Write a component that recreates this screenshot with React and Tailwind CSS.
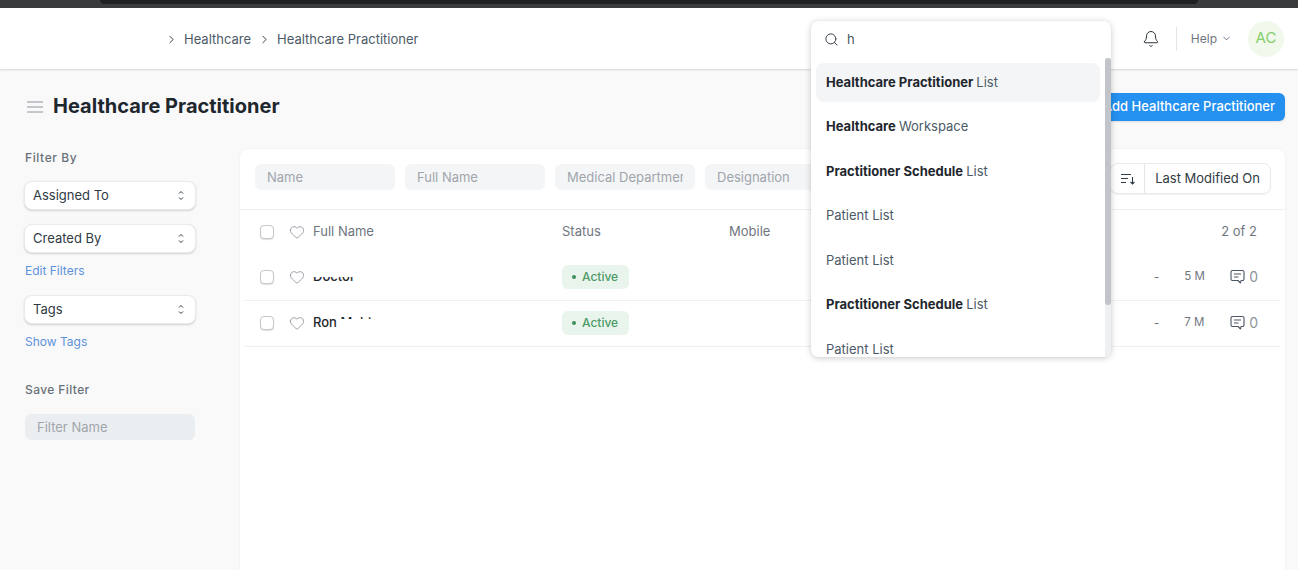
import { Search, Bell, ChevronRight, ChevronDown, Heart } from 'lucide-react'

const searchItems = [
  { bold: 'Healthcare Practitioner', rest: 'List', active: true },
  { bold: 'Healthcare', rest: 'Workspace' },
  { bold: 'Practitioner Schedule', rest: 'List' },
  { rest: 'Patient List' },
  { rest: 'Patient List' },
  { bold: 'Practitioner Schedule', rest: 'List' },
  { rest: 'Patient List' },
]

function Checkbox() {
  return <span className="h-[14px] w-[14px] shrink-0 rounded-[4px] border border-[#c4c7cc] bg-white shadow-[0_1px_1px_rgba(0,0,0,0.12)]" />
}

function FilterSelect({ label }) {
  return (
    <div className="flex h-[29px] w-[172px] items-center justify-between rounded-lg border border-[#e8eaed] bg-white pl-[8px] pr-[11px] text-[13px] text-[#313b44] shadow-[0_1px_2px_rgba(0,0,0,0.16)]">
      <span>{label}</span>
      <svg width="6" height="11" viewBox="0 0 6 11" fill="none" stroke="#313b44" strokeWidth="1">
        <path d="M1 3.5l2-2 2 2M1 7.5l2 2 2-2" />
      </svg>
    </div>
  )
}

function FieldInput({ label }) {
  return (
    <div className="flex h-[26px] w-[140px] shrink-0 items-center overflow-hidden whitespace-nowrap rounded-md bg-[#f4f5f6] pl-[12px] pr-[12px] pt-[1px] text-[13px] text-[#a0a5ad]">
      <span className="w-full overflow-hidden">{label}</span>
    </div>
  )
}

function ListRow({ name, ago }) {
  return (
    <div className="mx-[5px] flex h-[46px] items-center border-b border-[#eef0f2] pb-[2px] pl-[15px] pr-[22px]">
      <Checkbox />
      <Heart size={16} strokeWidth={1} className="ml-[15px] mt-[1px] shrink-0 text-[#6f7680]" />
      <div className="ml-[8px] w-[249px] shrink-0 text-[13px] font-medium text-[#1f272e]">{name}</div>
      <span className="flex h-[24px] w-[67px] items-center rounded-md bg-[#e9f4ec] pl-[10px] text-[12px] font-medium text-[#4c9a68]">
        <span className="mr-[6px] h-[4px] w-[4px] rounded-full bg-[#3f8f5e]" />
        Active
      </span>
      <div className="ml-auto flex items-center text-[#6f7680]">
        <span className="text-[12px]">-</span>
        <span className="ml-[25px] w-[24px] text-[11.5px]">{ago}</span>
        <svg width="15" height="15" viewBox="0 0 15 15" fill="none" stroke="#4b5563" strokeWidth="1.1" strokeLinejoin="round" className="ml-[22px]">
          <path d="M2.5 1.5h10a1.5 1.5 0 0 1 1.5 1.5v7a1.5 1.5 0 0 1-1.5 1.5H11l-.5 2.5-2.5-2.5H2.5A1.5 1.5 0 0 1 1 10V3a1.5 1.5 0 0 1 1.5-1.5z" />
          <path d="M4 5h7M4 8h4.5" />
        </svg>
        <span className="ml-[4px] text-[14px] text-[#8d949c]">0</span>
      </div>
    </div>
  )
}

export default function App() {
  return (
    <div className="relative flex h-[570px] w-full flex-col overflow-hidden bg-[#f9f9fa] font-['Inter',sans-serif]">
      {/* Browser chrome sliver */}
      <div className="h-[8px] shrink-0 bg-[#3a3b3d]">
        <div className="mx-[100px] h-[4px] rounded-b-lg bg-[#1f2023]" />
      </div>

      {/* Navbar */}
      <header className="flex h-[61px] shrink-0 items-center bg-white pl-[165px] pr-[14px] shadow-[0_1px_2px_rgba(0,0,0,0.14)]">
        <nav className="flex translate-y-[1px] items-center text-[13px] text-[#4c5a67]">
          <ChevronRight size={13} strokeWidth={1.75} className="text-[#313b44]" />
          <span className="ml-[6px]">Healthcare</span>
          <ChevronRight size={13} strokeWidth={1.75} className="ml-[7px] text-[#313b44]" />
          <span className="ml-[6px]">Healthcare Practitioner</span>
        </nav>
        <div className="ml-auto flex items-center">
          <Bell size={18} strokeWidth={1.25} className="text-[#1f272e]" />
          <span className="ml-[16px] h-[24px] w-px bg-[#e2e6e9]" />
          <span className="ml-[14px] text-[12px] text-[#6f7680]">Help</span>
          <ChevronDown size={11} strokeWidth={1.75} className="ml-[4px] text-[#4c5a67]" />
          <span className="ml-[16px] flex h-[36px] w-[36px] items-center justify-center rounded-full bg-[#f1f8ec] text-[15px] text-[#86cf6b]">AC</span>
        </div>
      </header>

      {/* Page head */}
      <div className="flex h-[80px] shrink-0 items-center pb-[5px] pl-[27px] pr-[13px]">
        <svg width="16" height="12" viewBox="0 0 16 12" fill="none" stroke="#8d949c" strokeWidth="1.2">
          <path d="M0 1h16M0 6h16M0 11h16" />
        </svg>
        <h1 className="ml-[10px] -translate-y-[1px] text-[20px] font-bold text-[#1f272e]">Healthcare Practitioner</h1>
        <button className="ml-auto h-[28px] rounded-md bg-[#2490ef] px-[10px] text-[13px] font-medium text-white shadow-[0_1px_2px_rgba(0,0,0,0.12)]">
          Add Healthcare Practitioner
        </button>
      </div>

      <div className="flex min-h-0 flex-1">
        {/* Filters sidebar */}
        <aside className="w-[240px] shrink-0 pl-[24px]">
          <div className="pl-[1px] pt-[2px] text-[12px] font-medium leading-[14px] tracking-[0.6px] text-[#687178]">Filter By</div>
          <div className="mt-[16px]"><FilterSelect label="Assigned To" /></div>
          <div className="mt-[14px]"><FilterSelect label="Created By" /></div>
          <div className="mt-[10px] pl-[1px] text-[12px] leading-[15px] text-[#5e92d9]">Edit Filters</div>
          <div className="mt-[17px]"><FilterSelect label="Tags" /></div>
          <div className="mt-[10px] pl-[1px] text-[12px] leading-[15px] text-[#5e92d9]">Show Tags</div>
          <div className="mt-[34px] pl-[1px] text-[12px] font-medium leading-[14px] tracking-[0.4px] text-[#687178]">Save Filter</div>
          <div className="ml-[1px] mt-[17px] flex h-[26px] w-[170px] items-center rounded-md bg-[#ebeef0] pl-[12px] pt-[1px] text-[13px] text-[#a0a5ad]">Filter Name</div>
        </aside>

        {/* List card */}
        <main className="mr-[13px] flex-1 rounded-t-lg bg-white shadow-[0_0_2px_rgba(0,0,0,0.08)]">
          <div className="flex h-[61px] items-start gap-[10px] border-b border-[#eef0f2] pl-[15px] pr-[14px] pt-[15px]">
            <FieldInput label="Name" />
            <FieldInput label="Full Name" />
            <FieldInput label="Medical Department" />
            <FieldInput label="Designation" />
            <div className="ml-auto -mt-[1px] flex h-[31px] items-center rounded-lg border border-[#e8eaed] text-[13px] text-[#313b44] shadow-[0_1px_1px_rgba(0,0,0,0.06)]">
              <span className="flex h-full w-[34px] items-center justify-center border-r border-[#e2e6e9]">
                <svg width="15" height="12" viewBox="0 0 15 12" fill="none" stroke="#313b44" strokeWidth="1.1">
                  <path d="M1 1.5h10M1 5.5h7M1 9.5h5M12.5 4v7M10.5 9l2 2 2-2" />
                </svg>
              </span>
              <span className="px-[10px]">Last Modified On</span>
            </div>
          </div>

          <div className="flex h-[45px] items-center pb-[2px] pl-[20px] pr-[28px] text-[13px] text-[#6f7680]">
            <Checkbox />
            <Heart size={16} strokeWidth={1} className="ml-[15px] shrink-0 text-[#6f7680]" />
            <span className="ml-[8px] w-[249px] shrink-0">Full Name</span>
            <span className="w-[167px] shrink-0">Status</span>
            <span>Mobile</span>
            <span className="ml-auto">2 of 2</span>
          </div>

          <ListRow
            ago="5 M"
            name={
              <span className="relative inline-block">
                Doctor
                <span className="absolute left-0 right-0 top-0 h-[10px] bg-white" />
              </span>
            }
          />
          <ListRow
            ago="7 M"
            name={
              <span className="relative inline-block">
                Ron Mehta
                <span className="absolute bottom-0 left-[27px] right-0 h-[13px] bg-white" />
              </span>
            }
          />
        </main>
      </div>

      {/* Search awesomebar dropdown */}
      <div className="absolute left-[811px] top-[21px] w-[300px] rounded-lg bg-white shadow-[0_1px_6px_rgba(0,0,0,0.22)]">
        <div className="flex h-[37px] items-center pl-[13px] text-[13px] text-[#4c5a67]">
          <Search size={15} strokeWidth={1.5} className="text-[#313b44]" />
          <span className="ml-[8px]">h</span>
        </div>
        <div className="flex h-[299px]">
          <div className="min-w-0 flex-1 overflow-hidden pl-[5px] pr-[5px] pt-[5px]">
            {searchItems.map((item, i) => (
              <div
                key={i}
                className={`flex h-[39px] items-center whitespace-pre rounded-lg pl-[10px] text-[13px] text-[#4c5a67] ${i ? 'mt-[5.5px]' : ''} ${item.active ? 'bg-[#f4f5f6]' : ''}`}
              >
                {item.bold ? <span className="font-bold text-[#1f272e]">{item.bold} </span> : null}
                {item.rest}
              </div>
            ))}
          </div>
          <div className="w-[6px] shrink-0 rounded-br-lg bg-[#eff0f2]">
            <div className="h-[247px] rounded-[3px] bg-[#c1c5ca]" />
          </div>
        </div>
      </div>
    </div>
  )
}
